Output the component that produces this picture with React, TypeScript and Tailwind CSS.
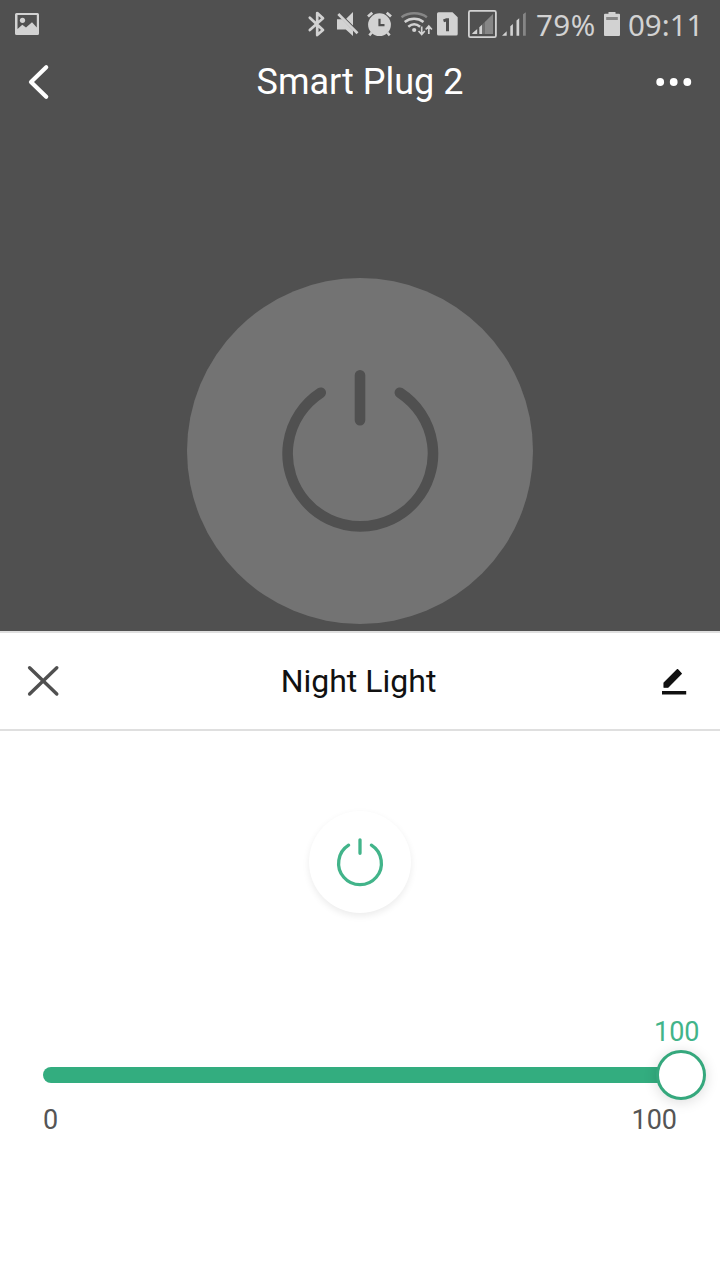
import type { ReactNode } from "react";

type GlyphProps = { x: number; width: number; children: ReactNode };

// Status glyphs share one coordinate row, so neighbouring icons tile without gaps.
function StatusGlyph({ x, width, children }: GlyphProps) {
  return (
    <svg width={width} height={48} viewBox={`${x} 0 ${width} 48`} fill="none" className="shrink-0" aria-hidden="true">
      {children}
    </svg>
  );
}

const INK = "#d2d2d2";
const DIM = "#868686";

function StatusBar() {
  return (
    <div className="flex h-12 items-center font-['Noto_Sans',sans-serif] text-[29.5px] leading-[48px] text-[#d2d2d2]">
      <StatusGlyph x={0} width={52}>
        <path fillRule="evenodd" fill={INK} d="M16.5 13h21a1.5 1.5 0 0 1 1.5 1.5v19a1.5 1.5 0 0 1-1.5 1.5h-21a1.5 1.5 0 0 1-1.5-1.5v-19a1.5 1.5 0 0 1 1.5-1.5ZM17.5 15v14l4.8-4.2 3.7 2.7 6-5.2 4.8 5.2V15Z" />
        <circle cx="22.5" cy="20.3" r="2.6" fill={INK} />
      </StatusGlyph>
      <div className="grow" />
      <StatusGlyph x={304} width={27}>
        <path d="M309.8 17.7 323 30l-5.8 5V13l5.8 5.3-13.2 11.8" stroke={INK} strokeWidth="2.7" strokeLinejoin="round" strokeLinecap="round" />
      </StatusGlyph>
      <StatusGlyph x={331} width={32}>
        <path fill={INK} d="M337 19.2h5l11 11.3V36l-7.2-6.4H337ZM353 12v13.5l-6.8-6.7Z" />
        <path d="m338.3 14 19.2 19.2" stroke={INK} strokeWidth="2.7" />
      </StatusGlyph>
      <StatusGlyph x={363} width={34}>
        <circle cx="379.5" cy="24.7" r="11.4" fill={INK} />
        <path d="m368 16.5 4.3-3.8M391 16.5l-4.3-3.8" stroke={INK} strokeWidth="2.8" />
        <path d="m371.8 32.5-2.5 2.8M387.2 32.5l2.5 2.8" stroke={INK} strokeWidth="2.6" />
        <path d="M379.5 18.8v6.4h5" stroke="#505050" strokeWidth="2.2" />
      </StatusGlyph>
      <StatusGlyph x={397} width={37}>
        <path d="M401.5 17.2c7.2-5.2 18.2-5.2 25.4 0" stroke={DIM} strokeWidth="2.4" />
        <path d="M404.7 22c5.6-4.2 13.2-4.2 18.8 0M408.3 26.7c3.7-3 8.1-3 11.8 0" stroke={INK} strokeWidth="2.5" />
        <circle cx="414.2" cy="30" r="2.1" fill={INK} />
        <path d="M421.7 26.5V34m-3.1-3 3.1 3.5 3.1-3.5M428.8 34v-7.5m-3.1 3 3.1-3.5 3.1 3.5" stroke={INK} strokeWidth="1.7" />
      </StatusGlyph>
      <StatusGlyph x={434} width={30}>
        <path fill={INK} d="M438.5 12.3h14l5.2 5V34a1.5 1.5 0 0 1-1.5 1.5h-17.7A1.5 1.5 0 0 1 437 34V13.8a1.5 1.5 0 0 1 1.5-1.5Z" />
        <path d="m443.5 20.8 3-1h1v11.4" stroke="#505050" strokeWidth="3" />
      </StatusGlyph>
      <StatusGlyph x={464} width={36}>
        <rect x="468.9" y="10.9" width="27" height="26.3" rx="1.5" stroke={INK} strokeWidth="1.8" />
        <path fill={INK} d="M472.3 34v-.7l4.9-4.4V34ZM479.3 34v-6.8l2.7-2.4V34Z" />
        <path fill={DIM} d="M484.8 34V22.1l8.2-8V34Z" />
        <path fill={DIM} d="M482 34v-9.2l2.8-2.7V34Z" opacity=".55" />
      </StatusGlyph>
      <StatusGlyph x={500} width={36}>
        <path fill={INK} d="m502 35.8 4.7-4.6v4.6ZM510.3 35.8v-9.6l2.6-2.2v11.8ZM516.5 35.8V20.5l2.7-2.2v17.5Z" />
        <path fill={DIM} d="M523 35.8V14.2l2.8-2v23.6Z" />
      </StatusGlyph>
      <span className="w-[64px] pt-px whitespace-nowrap tracking-[0.5px]">79%</span>
      <StatusGlyph x={600} width={27}>
        <path fill={INK} d="M608.5 12h7v1.7h3.5a1 1 0 0 1 1 1V35a1 1 0 0 1-1 1h-14a1 1 0 0 1-1-1V14.7a1 1 0 0 1 1-1h3.5Z" />
        <path fill={DIM} d="M606.2 17h11.6v3h-11.6Z" />
      </StatusGlyph>
      <span className="w-[93px] pt-px pl-px whitespace-nowrap">09:11</span>
    </div>
  );
}

function LampButton() {
  return (
    <button aria-label="Toggle plug" className="mx-auto mt-[163px] flex size-[346px] items-center justify-center rounded-full bg-[#737373]">
      <svg width="346" height="346" viewBox="187 278 346 346" fill="none" stroke="#505050" strokeWidth="10.6" strokeLinecap="round">
        <path d="M360 375.3v45M320.7 392.7a72.7 72.7 0 1 0 79.2 0" />
      </svg>
    </button>
  );
}

export default function App() {
  return (
    <main className="flex h-[1280px] w-[720px] flex-col overflow-hidden bg-white font-[Roboto,sans-serif]">
      <section className="h-[631px] shrink-0 bg-[#505050]">
        <StatusBar />
        <header className="grid h-[67px] grid-cols-[100px_1fr_100px] items-center text-white">
          <button aria-label="Back">
            <svg width="100" height="67" viewBox="0 48 100 67" fill="none" stroke="white" strokeWidth="4.2" strokeLinecap="round" strokeLinejoin="round">
              <path d="M46.2 67.3 31 82l15.2 14.7" />
            </svg>
          </button>
          <h1 className="pt-0.5 text-center text-[36px] leading-[65px]">Smart Plug 2</h1>
          <button aria-label="More">
            <svg width="100" height="67" viewBox="620 48 100 67" fill="white">
              <circle cx="660.2" cy="82" r="3.9" />
              <circle cx="673.7" cy="82" r="3.9" />
              <circle cx="687.3" cy="82" r="3.9" />
            </svg>
          </button>
        </header>
        <LampButton />
      </section>
      <section className="flex grow flex-col bg-white">
        <header className="grid h-[100px] shrink-0 grid-cols-[100px_1fr_100px] items-center border-y-2 border-[#dfdfdf] text-[#111111]">
          <button aria-label="Close">
            <svg width="100" height="96" viewBox="0 633 100 96" fill="none" stroke="#505050" strokeWidth="3.4" strokeLinecap="round">
              <path d="m29.6 667.7 27.2 26.3M56.8 667.7 29.6 694" />
            </svg>
          </button>
          <h2 className="pr-[3px] text-center text-[32px] leading-[96px]">Night Light</h2>
          <button aria-label="Rename">
            <svg width="100" height="96" viewBox="620 633 100 96" fill="#111111">
              <path d="m677.5 669.5 3.9 4.1-13.3 13.6H664v-4.3Z" stroke="#111111" strokeWidth="1.1" strokeLinejoin="round" />
              <path d="M662 691h24.2v3.5H662Z" />
            </svg>
          </button>
        </header>
        <button aria-label="Toggle night light" className="mx-auto mt-[80px] size-[102px] rounded-full bg-white shadow-[0_3px_7px_rgba(0,0,0,0.08)]">
          <svg width="102" height="102" viewBox="309 811 102 102" fill="none" stroke="#42b48a" strokeWidth="3.3" strokeLinecap="round">
            <path d="M360 839.8v13.5M348.6 845.2a21.4 21.4 0 1 0 22.8 0" />
          </svg>
        </button>
        <div className="mt-[103px] flex flex-col text-[27px] leading-8">
          <output className="pr-[20.5px] text-right text-[#42b48a]">100</output>
          <div className="mt-[2px] flex h-[50px] items-center pr-[14px] pl-[43px]">
            <div className="h-4 grow rounded-l-full bg-[#33ad7f]" />
            <div className="z-10 -ml-1 size-[50px] shrink-0 rounded-full border-[3px] border-[#35a87d] bg-white shadow-[0_2px_14px_rgba(0,0,0,0.14)]" />
          </div>
          <div className="mt-[4px] flex justify-between pr-[43px] pl-[43px] text-[#555555]">
            <span>0</span>
            <span>100</span>
          </div>
        </div>
      </section>
    </main>
  );
}
